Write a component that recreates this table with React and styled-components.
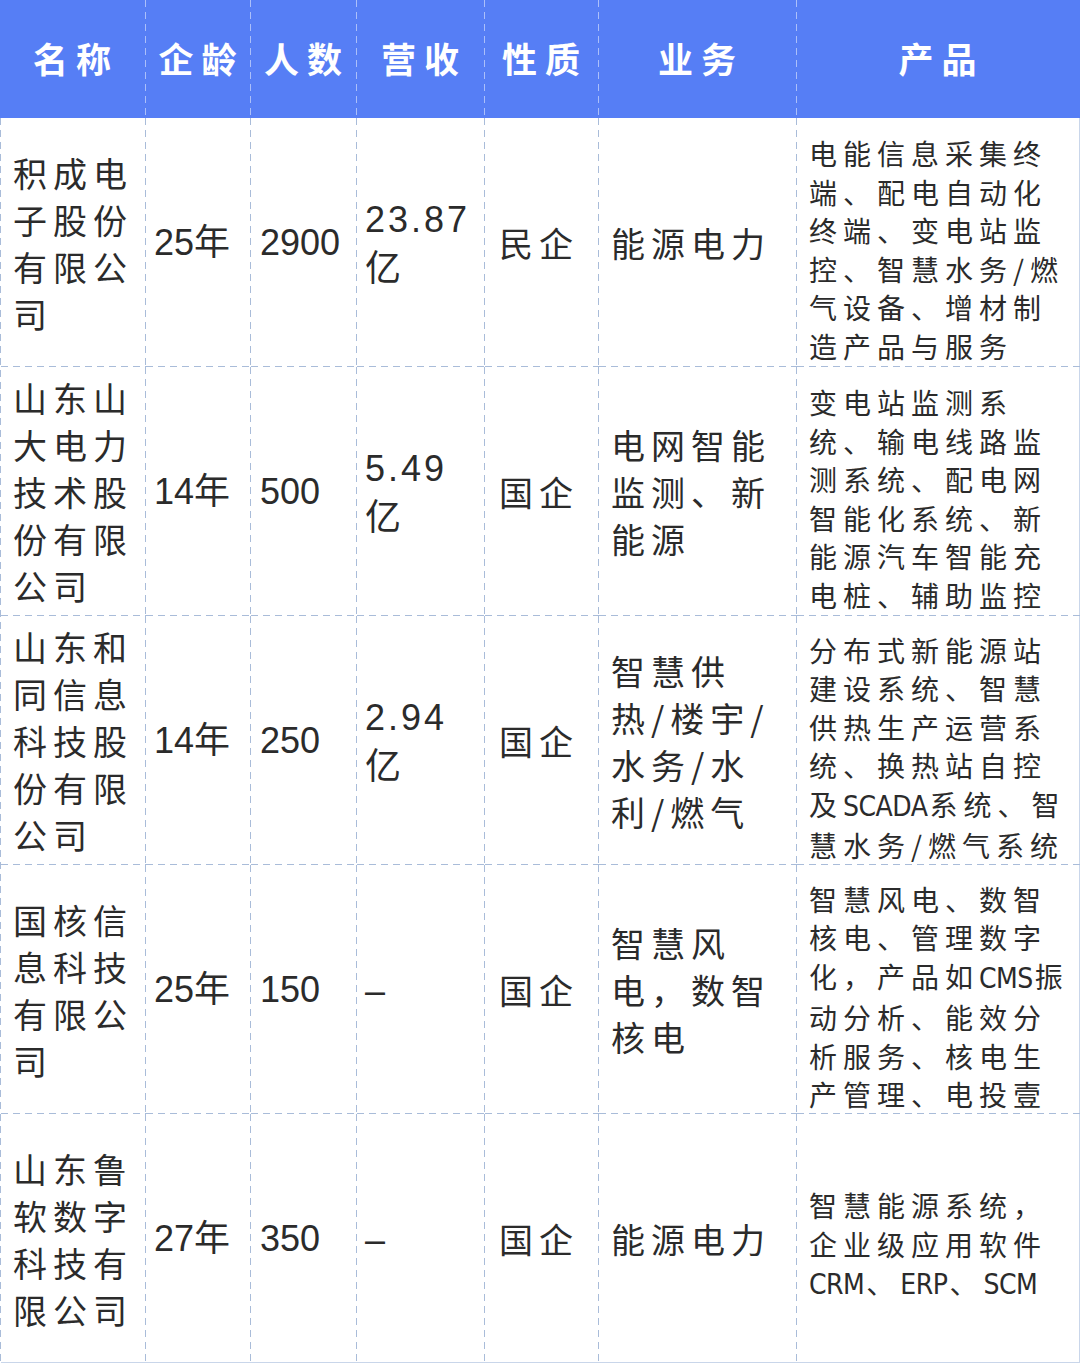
import React from 'react';
import styled, { createGlobalStyle } from 'styled-components';

const GlobalStyle = createGlobalStyle`
  html, body {
    margin: 0;
    padding: 0;
    background: #ffffff;
  }
  body {
    font-family: "Liberation Sans", "Noto Sans CJK SC", sans-serif;
    color: #2b2b2b;
  }
`;

const lineColor = '#a9bcd9';

// dashed rules drawn as gradients so the dashes are longer than the browser default
const vDash = (c) => `linear-gradient(to bottom, ${c} 60%, transparent 60%) right top / 1px 12px repeat-y`;
const hDash = (c) => `linear-gradient(to right, ${c} 60%, transparent 60%) left bottom / 12px 1px repeat-x`;

const Table = styled.div`
  display: grid;
  grid-template-columns: 145px 105px 106px 128px 114px 198px 283px;
  grid-template-rows: 118px repeat(5, 249px);
  width: 1080px;
  box-sizing: border-box;
  padding-left: 1px;
  padding-right: 1px;
  background: linear-gradient(to bottom, ${lineColor} 60%, transparent 60%) left 118px / 1px 12px repeat-y;
  border-right: 1px solid #c9d6ea;
`;

const HeadCell = styled.div`
  background: ${(p) => (p.last ? '#567ef5' : `${vDash('rgba(255, 255, 255, 0.5)')}, #567ef5`)};
  color: #ffffff;
  font-family: "Noto Sans CJK SC", sans-serif;
  font-weight: 700;
  font-size: 35px;
  letter-spacing: 8px;
  display: flex;
  align-items: center;
  justify-content: center;
  padding-left: 6px;
  padding-bottom: 4px;
  box-sizing: border-box;
  margin-left: ${(p) => (p.first ? '-1px' : '0')};
`;

const Cell = styled.div`
  display: flex;
  flex-direction: column;
  justify-content: center;
  box-sizing: border-box;
  padding-left: ${(p) => p.pad || 10}px;
  padding-top: ${(p) => p.top || 0}px;
  background: ${(p) => (p.last ? '' : `${vDash(lineColor)},`)}
    ${(p) => (p.bottom ? `linear-gradient(#c9d6ea, #c9d6ea) left bottom / 100% 1px no-repeat` : hDash(lineColor))};
  font-family: "Noto Sans CJK SC", sans-serif;
  font-size: ${(p) => p.size || 34}px;
  line-height: ${(p) => p.lh || 47}px;
  letter-spacing: ${(p) => (p.spacing === undefined ? 6 : p.spacing)}px;
  white-space: nowrap;
  min-width: 0;
`;

const NumText = styled.span`
  font-family: "Liberation Sans", "Noto Sans CJK SC", sans-serif;
  font-size: 36px;
  letter-spacing: ${(p) => p.spacing || 0}px;
`;

const Latin = styled.span`
  font-family: "Liberation Sans Narrow", "DejaVu Sans Condensed", "Liberation Sans", sans-serif;
  letter-spacing: -0.5px;
  margin-right: 2px;
`;

const Line = styled.div``;

const headers = ['名称', '企龄', '人数', '营收', '性质', '业务', '产品'];

const rows = [
  {
    name: ['积成电', '子股份', '有限公', '司'],
    age: '25年',
    staff: '2900',
    revenue: ['23.87', '亿'],
    type: '民企',
    business: ['能源电力'],
    products: ['电能信息采集终', '端、配电自动化', '终端、变电站监', '控、智慧水务/燃', '气设备、增材制', '造产品与服务'],
  },
  {
    name: ['山东山', '大电力', '技术股', '份有限', '公司'],
    age: '14年',
    staff: '500',
    revenue: ['5.49', '亿'],
    type: '国企',
    business: ['电网智能', '监测、新', '能源'],
    products: ['变电站监测系', '统、输电线路监', '测系统、配电网', '智能化系统、新', '能源汽车智能充', '电桩、辅助监控'],
  },
  {
    name: ['山东和', '同信息', '科技股', '份有限', '公司'],
    age: '14年',
    staff: '250',
    revenue: ['2.94', '亿'],
    type: '国企',
    business: ['智慧供', '热/楼宇/', '水务/水', '利/燃气'],
    products: ['分布式新能源站', '建设系统、智慧', '供热生产运营系', '统、换热站自控', '及SCADA系统、智', '慧水务/燃气系统'],
  },
  {
    name: ['国核信', '息科技', '有限公', '司'],
    age: '25年',
    staff: '150',
    revenue: ['–'],
    type: '国企',
    business: ['智慧风', '电，数智', '核电'],
    products: ['智慧风电、数智', '核电、管理数字', '化，产品如CMS振', '动分析、能效分', '析服务、核电生', '产管理、电投壹'],
  },
  {
    name: ['山东鲁', '软数字', '科技有', '限公司'],
    age: '27年',
    staff: '350',
    revenue: ['–'],
    type: '国企',
    business: ['能源电力'],
    products: ['智慧能源系统，', '企业级应用软件', 'CRM、ERP、SCM'],
  },
];

const renderMixed = (text) =>
  text.split(/([A-Za-z]+)/).map((part, i) =>
    /^[A-Za-z]+$/.test(part) ? <Latin key={i}>{part}</Latin> : part
  );

const App = () => (
  <>
    <GlobalStyle />
    <Table>
      {headers.map((h, i) => (
        <HeadCell key={h} first={i === 0} last={i === headers.length - 1}>
          {h}
        </HeadCell>
      ))}
      {rows.map((r, ri) => {
        const bottom = ri === rows.length - 1;
        return (
          <React.Fragment key={ri}>
            <Cell bottom={bottom} pad={12}>
              {r.name.map((l) => (
                <Line key={l}>{l}</Line>
              ))}
            </Cell>
            <Cell bottom={bottom} pad={8} spacing={0}>
              <NumText>{r.age}</NumText>
            </Cell>
            <Cell bottom={bottom} pad={9} spacing={0}>
              <NumText>{r.staff}</NumText>
            </Cell>
            <Cell bottom={bottom} pad={8} spacing={0}>
              {r.revenue.map((l, i) => (
                <Line key={i}>
                  <NumText spacing={i === 0 ? 3 : 0}>{l}</NumText>
                </Line>
              ))}
            </Cell>
            <Cell bottom={bottom} pad={14}>
              {r.type}
            </Cell>
            <Cell bottom={bottom} pad={12}>
              {r.business.map((l) => (
                <Line key={l}>{l}</Line>
              ))}
            </Cell>
            <Cell bottom={bottom} pad={12} top={14} size={28} lh={38.5} last>
              {r.products.map((l) => (
                <Line key={l}>{renderMixed(l)}</Line>
              ))}
            </Cell>
          </React.Fragment>
        );
      })}
    </Table>
  </>
);

export default App;
